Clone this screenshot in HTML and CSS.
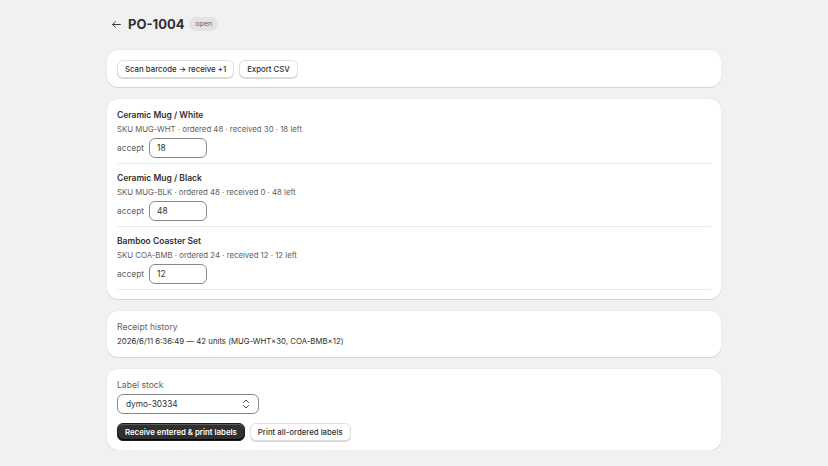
FILE: index.html
```html
<!DOCTYPE html>
<html lang="en">
<head>
    <meta charset="UTF-8">
    <meta name="viewport" content="width=device-width, initial-scale=1.0">
    <title>PO-1004</title>
    <link rel="stylesheet" href="styles.css">
</head>
<body>
    <div class="page">
        <div class="page-header">
            <button class="back-btn" aria-label="Back">
                <svg width="11" height="11" viewBox="0 0 20 20" fill="none" stroke="#303030" stroke-width="1.7" stroke-linecap="round" stroke-linejoin="round">
                    <path d="M17 10H3M8 5l-5 5 5 5"/>
                </svg>
            </button>
            <h1 class="page-title">PO-1004</h1>
            <span class="badge">open</span>
        </div>

        <div class="card card-toolbar">
            <div class="btn-row">
                <button class="btn">Scan barcode → receive +1</button>
                <button class="btn">Export CSV</button>
            </div>
        </div>

        <div class="card">
            <div class="line-item">
                <div class="item-title">Ceramic Mug / White</div>
                <div class="item-meta">SKU MUG-WHT · ordered 48 · received 30 · 18 left</div>
                <label class="accept-row">accept <input class="qty-input" type="text" value="18"></label>
            </div>
            <div class="line-item">
                <div class="item-title">Ceramic Mug / Black</div>
                <div class="item-meta">SKU MUG-BLK · ordered 48 · received 0 · 48 left</div>
                <label class="accept-row">accept <input class="qty-input" type="text" value="48"></label>
            </div>
            <div class="line-item">
                <div class="item-title">Bamboo Coaster Set</div>
                <div class="item-meta">SKU COA-BMB · ordered 24 · received 12 · 12 left</div>
                <label class="accept-row">accept <input class="qty-input" type="text" value="12"></label>
            </div>
        </div>

        <div class="card">
            <div class="section-label">Receipt history</div>
            <div class="history-line">2026/6/11 6:36:49 — 42 units (MUG-WHT×30, COA-BMB×12)</div>
        </div>

        <div class="card">
            <div class="section-label">Label stock</div>
            <div class="select">
                <span>dymo-30334</span>
                <svg width="8" height="10" viewBox="0 0 8 10" fill="none" stroke="#4a4a4a" stroke-width="1" stroke-linecap="round" stroke-linejoin="round">
                    <path d="M1.5 3.5L4 1l2.5 2.5M1.5 6.5L4 9l2.5-2.5"/>
                </svg>
            </div>
            <div class="btn-row print-row">
                <button class="btn btn-primary">Receive entered &amp; print labels</button>
                <button class="btn">Print all-ordered labels</button>
            </div>
        </div>
    </div>
</body>
</html>
```

FILE: styles.css
```css
* {
    margin: 0;
    padding: 0;
    box-sizing: border-box;
}

body {
    font-family: Inter, 'Noto Sans', sans-serif;
    background: #f1f1f1;
    color: #303030;
    font-size: 7.8px;
}

.page {
    width: 614px;
    margin: 0 auto;
    padding-top: 14px;
    display: flex;
    flex-direction: column;
    gap: 12px;
}

/* Header */
.page-header {
    display: flex;
    align-items: center;
    height: 20px;
    margin-bottom: 4px;
}

.back-btn {
    border: none;
    background: none;
    width: 14px;
    height: 14px;
    display: flex;
    align-items: center;
    justify-content: center;
    margin-left: 2px;
    margin-right: 5px;
}

.page-title {
    font-size: 13px;
    font-weight: 700;
    color: #303030;
}

.badge {
    margin-left: 5px;
    background: #e3e3e3;
    color: #616161;
    font-size: 7px;
    line-height: 14px;
    padding: 0 6px;
    border-radius: 7px;
}

/* Cards */
.card {
    background: #fff;
    border-radius: 11px;
    padding: 9px 10px;
    box-shadow: 0 1px 0 rgba(0,0,0,0.09), 0 0 0 0.5px rgba(0,0,0,0.05);
}

.card-toolbar {
    padding-top: 10px;
}

.btn-row {
    display: flex;
    gap: 5px;
}

.btn {
    font-family: inherit;
    font-size: 7.8px;
    font-weight: 500;
    color: #303030;
    background: #fff;
    height: 18px;
    padding: 0 7px;
    border: 1px solid #e0e0e0;
    border-radius: 6px;
    box-shadow: 0 1px 0 #d4d4d4;
}

.btn-primary {
    background: #303030;
    border-color: #1a1a1a;
    color: #fff;
    font-weight: 600;
    box-shadow: inset 0 -1px 0 #000, inset 0 1px 0 rgba(255,255,255,0.2);
}

/* Line items */
.line-item {
    padding: 7px 0 5px;
    border-bottom: 1px solid #ebebeb;
}

.line-item:first-child {
    padding-top: 0;
}

.item-title {
    font-size: 8.5px;
    font-weight: 600;
    line-height: 14px;
}

.item-meta {
    color: #616161;
    line-height: 14px;
}

.accept-row {
    display: flex;
    align-items: center;
    gap: 5px;
    margin-top: 2px;
    font-size: 8.4px;
    color: #616161;
}

.qty-input {
    font-family: inherit;
    font-size: 8.4px;
    color: #303030;
    width: 58px;
    height: 20px;
    padding: 0 7px;
    border: 1px solid #8a8a8a;
    border-radius: 6px;
    outline: none;
}

/* Receipt history / label stock */
.section-label {
    color: #616161;
    line-height: 14px;
    font-size: 8.6px;
}

.history-line {
    line-height: 14px;
}

.select {
    margin-top: 2px;
    width: 142px;
    height: 20px;
    display: flex;
    align-items: center;
    justify-content: space-between;
    padding: 0 8px;
    border: 1px solid #8a8a8a;
    border-radius: 6px;
    font-size: 8.3px;
}

.print-row {
    margin-top: 9px;
}
```
